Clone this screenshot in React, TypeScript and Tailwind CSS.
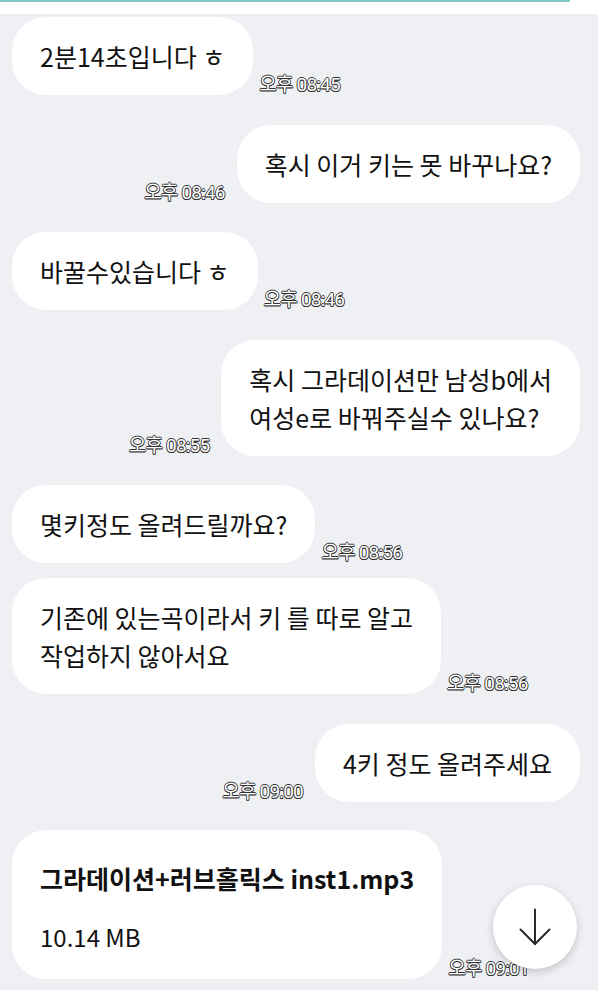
import React from "react";

const FONT = { fontFamily: '"Noto Sans CJK KR", "Noto Sans", sans-serif' };

function Time({ t, side }: { t: string; side: "l" | "r" }) {
  return (
    <span
      className={`shrink-0 text-[19px] leading-[22px] tracking-[-0.8px] text-white [text-shadow:0.7px_0_#333,-0.7px_0_#333,0_0.7px_#333,0_-0.7px_#333,0.5px_0.5px_#333,-0.5px_-0.5px_#333,0.5px_-0.5px_#333,-0.5px_0.5px_#333] ${
        side === "l" ? "ml-[6px] mb-[-1px]" : "mr-[12px] mb-[-1px]"
      }`}
      style={{ fontFamily: 'Roboto, "Noto Sans CJK KR", sans-serif' }}
    >
      {t}
    </span>
  );
}

function Left({ children, t, mt }: { children: React.ReactNode; t: string; mt: string }) {
  return (
    <div className={`flex items-end pl-[12px] ${mt}`}>
      <div className="bg-white rounded-[34px] px-[28px] py-[20px] text-[25px] leading-[38px] text-[#111] whitespace-nowrap">
        {children}
      </div>
      <Time t={t} side="l" />
    </div>
  );
}

function Right({ children, t, mt }: { children: React.ReactNode; t: string; mt: string }) {
  return (
    <div className={`flex items-end justify-end pr-[18px] ${mt}`}>
      <Time t={t} side="r" />
      <div className="bg-white rounded-[34px] px-[28px] py-[20px] text-[25px] leading-[38px] text-[#111] whitespace-nowrap">
        {children}
      </div>
    </div>
  );
}

export default function App() {
  return (
    <div className="relative w-[598px] h-[1000px] bg-[#eef0f4] flex flex-col overflow-hidden" style={FONT}>
      <div className="h-[14px] bg-white shrink-0 relative">
        <div className="absolute left-0 top-0 h-[2px] w-[570px] bg-[#86c8c6]" />
      </div>
      <div className="flex-1 flex flex-col pt-[3px]">
        <Left t="오후 08:45" mt="mt-0">2분14초입니다 ㅎ</Left>
        <Right t="오후 08:46" mt="mt-[30px]">혹시 이거 키는 못 바꾸나요?</Right>
        <Left t="오후 08:46" mt="mt-[29px]">바꿀수있습니다 ㅎ</Left>
        <Right t="오후 08:55" mt="mt-[30px]">
          혹시 그라데이션만 남성b에서
          <br />
          여성e로 바꿔주실수 있나요?
        </Right>
        <Left t="오후 08:56" mt="mt-[29px]">몇키정도 올려드릴까요?</Left>
        <Left t="오후 08:56" mt="mt-[15px]">
          기존에 있는곡이라서 키 를 따로 알고
          <br />
          작업하지 않아서요
        </Left>
        <Right t="오후 09:00" mt="mt-[30px]">4키 정도 올려주세요</Right>
        <div className="flex items-end pl-[12px] mt-[28px]">
          <div className="bg-white rounded-[34px] pl-[28px] pr-[28px] pt-[29px] pb-[23px] text-[#111] whitespace-nowrap">
            <div className="text-[25px] leading-[38px] font-bold">그라데이션+러브홀릭스 inst1.mp3</div>
            <div className="text-[24px] leading-[38px] mt-[21px]">10.14 MB</div>
          </div>
          <Time t="오후 09:01" side="l" />
        </div>
      </div>
      <div className="h-[10px] bg-white shrink-0" />
      <div className="absolute left-[493px] top-[885px] w-[84px] h-[84px] rounded-full bg-white shadow-[0_3px_8px_rgba(0,0,0,0.18)] flex items-center justify-center">
        <svg width="36" height="40" viewBox="0 0 36 40" fill="none" stroke="#2a2a2a" strokeWidth="2" strokeLinecap="round" strokeLinejoin="round">
          <path d="M18 2.5V37" />
          <path d="M3.5 22.5L18 37L32.5 22.5" />
        </svg>
      </div>
    </div>
  );
}
